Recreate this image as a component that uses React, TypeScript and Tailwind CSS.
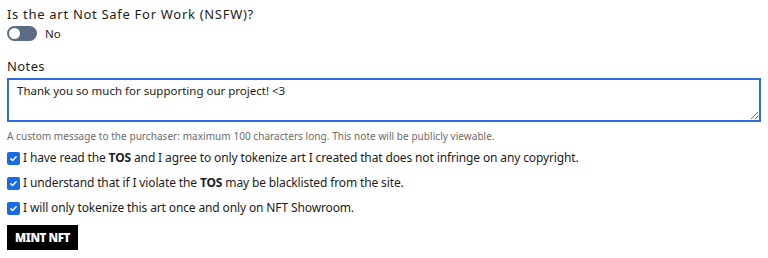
import { useState } from "react";

function Check({ children }: { children: React.ReactNode }) {
  return (
    <label className="flex h-[18px] items-center gap-[3px] text-[12px] tracking-[-0.13px] text-[#1c1c1c]">
      <span className="flex h-[13px] w-[13px] shrink-0 items-center justify-center rounded-[2px] bg-[#1a6be6]">
        <svg viewBox="0 0 12 12" className="h-[9px] w-[9px]" fill="none" stroke="white" strokeWidth="2" strokeLinecap="round" strokeLinejoin="round">
          <path d="M2.5 6.5l2.3 2.2 4.7-5" />
        </svg>
      </span>
      <span>{children}</span>
    </label>
  );
}

export default function App() {
  const [note, setNote] = useState("Thank you so much for supporting our project! <3");

  return (
    <div className="bg-white px-[7px] pt-[5px] font-['Noto_Sans',sans-serif] text-[#1c1c1c]">
      <div className="h-[18px] text-[13px] leading-[18px] tracking-[0.7px]">Is the art Not Safe For Work (NSFW)?</div>
      <div className="mt-[3px] flex h-[15px] items-center gap-[8px]">
        <span className="flex h-[15px] w-[30px] items-center rounded-full bg-[#5b6b84] px-[2px]">
          <span className="h-[11px] w-[11px] rounded-full bg-white" />
        </span>
        <span className="text-[11.5px] leading-[15px]">No</span>
      </div>

      <div className="mt-[16px] h-[18px] text-[13px] leading-[18px] tracking-[0.4px]">Notes</div>
      <textarea
        value={note}
        onChange={(e) => setNote(e.target.value)}
        className="mt-[3px] block h-[44px] w-full resize-y border-2 border-[#2f6be0] px-[8px] pt-[3px] pb-[2px] text-[11.5px] leading-[16px] text-[#1c1c1c] outline-none"
      />
      <div className="mt-[7px] h-[14px] text-[10px] leading-[14px] tracking-[0.05px] text-[#6b6b6b]">
        A custom message to the purchaser: maximum 100 characters long. This note will be publicly viewable.
      </div>

      <div className="mt-[6px] flex flex-col gap-[7px]">
        <Check>
          I have read the <b>TOS</b> and I agree to only tokenize art I created that does not infringe on any copyright.
        </Check>
        <Check>
          I understand that if I violate the <b>TOS</b> may be blacklisted from the site.
        </Check>
        <Check>I will only tokenize this art once and only on NFT Showroom.</Check>
      </div>

      <button className="mt-[8px] block h-[25px] bg-black px-[8px] text-[11.5px] font-black tracking-[-0.4px] text-white">
        MINT NFT
      </button>
    </div>
  );
}
